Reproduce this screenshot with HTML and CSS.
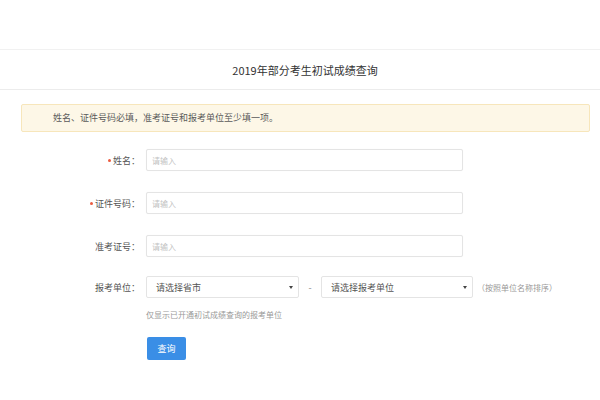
FILE: index.html
```html
<!DOCTYPE html>
<html lang="zh-CN">
<head>
<meta charset="utf-8">
<title>2019年部分考生初试成绩查询</title>
<link rel="stylesheet" href="styles.css">
</head>
<body>
<div class="top"></div>
<div class="header">2019年部分考生初试成绩查询</div>
<div class="alert">姓名、证件号码必填，准考证号和报考单位至少填一项。</div>
<form class="form">
  <div class="row">
    <label class="label"><span class="req"></span>姓名：</label>
    <input class="input" type="text" placeholder="请输入">
  </div>
  <div class="row">
    <label class="label"><span class="req"></span>证件号码：</label>
    <input class="input" type="text" placeholder="请输入">
  </div>
  <div class="row">
    <label class="label">准考证号：</label>
    <input class="input" type="text" placeholder="请输入">
  </div>
  <div class="row row-unit">
    <label class="label">报考单位：</label>
    <div class="select sel-prov"><span>请选择省市</span><i class="caret"></i></div>
    <span class="dash">-</span>
    <div class="select sel-unit"><span>请选择报考单位</span><i class="caret"></i></div>
    <span class="hint">（按照单位名称排序）</span>
  </div>
  <div class="help">仅显示已开通初试成绩查询的报考单位</div>
  <div class="actions"><button class="btn" type="button">查询</button></div>
</form>
</body>
</html>
```

FILE: styles.css
```css
* { box-sizing: border-box; }
body {
  margin: 0;
  background: #fff;
  font-family: "Noto Sans CJK SC", "Noto Sans", sans-serif;
  color: #555;
}
.top { height: 49px; }
.header {
  height: 41px;
  border-top: 1px solid #f1f1f1;
  border-bottom: 1px solid #ececec;
  display: flex;
  align-items: center;
  justify-content: center;
  padding-left: 10px;
  font-size: 11px;
  color: #333;
}
.alert {
  margin: 14px 10px 0 21px;
  height: 28px;
  border: 1px solid #f7e6bb;
  border-radius: 2px;
  background: #fdf7e7;
  padding-left: 31px;
  font-size: 9px;
  line-height: 26px;
  color: #5a5a5a;
}
.form { margin-top: 17px; }
.row {
  display: flex;
  align-items: center;
  height: 22px;
  margin-bottom: 21px;
}
.label {
  width: 140px;
  text-align: right;
  font-size: 9px;
  color: #555;
}
.req {
  display: inline-block;
  width: 3px;
  height: 3px;
  border-radius: 50%;
  background: #ec5b3f;
  vertical-align: middle;
  margin: -2px 2px 0 0;
}
.input {
  margin-left: 6px;
  width: 317px;
  height: 22px;
  border: 1px solid #e4e4e4;
  border-radius: 2px;
  padding: 0 5px;
  font-family: inherit;
  font-size: 8px;
  color: #555;
  box-shadow: 0 0 1px rgba(0,0,0,0.05);
  outline: none;
}
.input::placeholder { color: #c2c2c2; }
.row-unit { margin-top: -2px; }
.select {
  height: 22px;
  border: 1px solid #e4e4e4;
  border-radius: 2px;
  display: flex;
  align-items: center;
  justify-content: space-between;
  padding: 0 5px 0 9px;
  font-size: 9px;
  color: #555;
}
.sel-prov { margin-left: 6px; width: 153px; }
.sel-unit { width: 152px; }
.caret {
  width: 0;
  height: 0;
  border-left: 2px solid transparent;
  border-right: 2px solid transparent;
  border-top: 3px solid #444;
}
.dash {
  width: 22px;
  text-align: center;
  font-size: 9px;
  color: #888;
}
.hint {
  margin-left: 4px;
  font-size: 8px;
  color: #999;
}
.help {
  margin: -10px 0 0 146px;
  font-size: 8px;
  line-height: 12px;
  color: #999;
}
.actions { margin: 12px 0 0 147px; }
.btn {
  width: 39px;
  height: 23px;
  border: none;
  border-radius: 2px;
  background: #3a8ee6;
  color: #fff;
  font-family: inherit;
  font-size: 9px;
  padding: 0;
}
```
